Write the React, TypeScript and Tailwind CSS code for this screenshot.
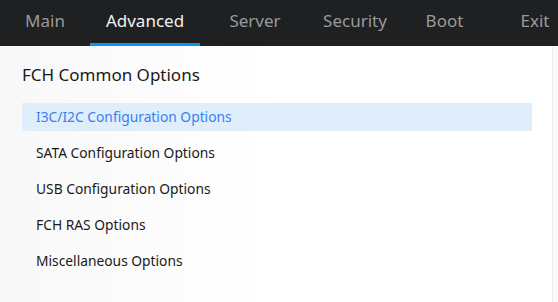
import React from "react";

const tabs = [
  { label: "Main", w: "w-[90px]" },
  { label: "Advanced", w: "w-[110px]", active: true },
  { label: "Server", w: "w-[110px]" },
  { label: "Security", w: "w-[90px]" },
  { label: "Boot", w: "w-[89px]" },
  { label: "Exit", w: "w-[92px]" },
];

const rows = [
  "I3C/I2C Configuration Options",
  "SATA Configuration Options",
  "USB Configuration Options",
  "FCH RAS Options",
  "Miscellaneous Options",
];

export default function App() {
  return (
    <div
      className="w-[558px] h-[302px] overflow-hidden bg-white flex flex-col"
      style={{ fontFamily: '"Noto Sans", "DejaVu Sans", sans-serif' }}
    >
      <div className="h-[46px] bg-[#1f2022] flex shrink-0 overflow-hidden">
        {tabs.map((t) => (
          <div
            key={t.label}
            className={`${t.w} shrink-0 relative flex justify-center pt-[8px] text-[17px] leading-[26px] ${
              t.active ? "text-[#f2f2f2]" : "text-[#9a9a9a]"
            }`}
          >
            {t.label}
            {t.active && (
              <div className="absolute left-0 right-0 bottom-0 h-[3px] bg-[#0a96ee]" />
            )}
          </div>
        ))}
      </div>
      <div className="flex-1 flex">
        <div className="flex-1 pl-[22px] pr-[20px] pt-[16px] bg-gradient-to-r from-[#f8f8f8] via-white to-white">
          <div className="text-[17px] leading-[26px] text-[#1a1a1a]">FCH Common Options</div>
          <div className="mt-[15px] flex flex-col">
            {rows.map((r, i) => (
              <div
                key={r}
                className={`h-[28px] mb-[8px] pl-[14px] flex items-center text-[13.8px] ${
                  i === 0 ? "bg-[#dfeefa] text-[#3a7ef2]" : "text-[#1a1a1a]"
                }`}
              >
                {r}
              </div>
            ))}
          </div>
        </div>
        <div className="w-[6px] border-l border-[#ececec] bg-[#fafafa]" />
      </div>
    </div>
  );
}
